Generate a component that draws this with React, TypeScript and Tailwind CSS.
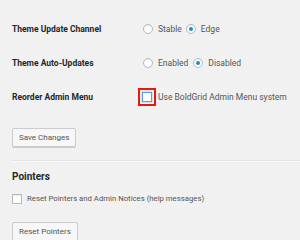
import React from 'react'

const font = { fontFamily: 'Roboto, "Liberation Sans", sans-serif' }

const Radio = ({ checked, label }: { checked?: boolean; label: string }) => (
  <label className="flex items-center gap-[5px] text-[8.5px] text-[#555]">
    <span className="flex h-[10px] w-[10px] items-center justify-center rounded-full border border-[#b4b9be] bg-white shadow-[inset_0_1px_1px_rgba(0,0,0,0.08)]">
      {checked && <span className="h-[4px] w-[4px] rounded-full bg-[#1e8cbe]" />}
    </span>
    {label}
  </label>
)

const Button = ({ children }: { children: React.ReactNode }) => (
  <button className="flex h-[19px] items-center rounded-[2px] border border-[#ccc] bg-[#f7f7f7] px-[6px] text-[8px] leading-none text-[#555] shadow-[0_1px_0_#ccc]">
    {children}
  </button>
)

export default function App() {
  return (
    <div className="flex h-[240px] w-[300px] flex-col overflow-hidden bg-[#f1f1f1] pl-[12px] pt-[12px]" style={font}>
      {/* settings table */}
      <div className="grid grid-cols-[131px_1fr]">
        <div className="flex h-[34px] items-center text-[8.5px] font-bold text-[#23282d]">Theme Update Channel</div>
        <div className="flex h-[34px] items-center gap-[4px]">
          <Radio label="Stable" />
          <Radio checked label="Edge" />
        </div>

        <div className="flex h-[34px] items-center text-[8.5px] font-bold text-[#23282d]">Theme Auto-Updates</div>
        <div className="flex h-[34px] items-center gap-[5px]">
          <Radio label="Enabled" />
          <Radio checked label="Disabled" />
        </div>

        <div className="flex h-[34px] items-center text-[8.5px] font-bold text-[#23282d]">Reorder Admin Menu</div>
        <div className="flex h-[34px] items-center gap-[2px]">
          <span className="-ml-[5px] flex h-[18px] w-[18px] items-center justify-center border-2 border-[#e8170f]">
            <span className="h-[10px] w-[10px] border border-[#5b9dd9] bg-white shadow-[0_0_1px_rgba(30,140,190,0.8)]" />
          </span>
          <span className="text-[8.5px] text-[#555]">Use BoldGrid Admin Menu system</span>
        </div>
      </div>

      <div className="mt-[14px] flex">
        <Button>Save Changes</Button>
      </div>

      <div className="mt-[13px] border-t border-[#e6e6e6] border-b border-b-[#fafafa]" />

      <h2 className="mt-[8px] text-[10px] font-bold leading-[14px] text-[#23282d]">Pointers</h2>

      <div className="mt-[10px] flex h-[10px] items-center gap-[5px]">
        <span className="h-[10px] w-[10px] border border-[#b4b9be] bg-white shadow-[inset_0_1px_1px_rgba(0,0,0,0.08)]" />
        <span className="text-[7.75px] text-[#555]">Reset Pointers and Admin Notices (help messages)</span>
      </div>

      <div className="mt-[18px] flex">
        <Button>Reset Pointers</Button>
      </div>
    </div>
  )
}
